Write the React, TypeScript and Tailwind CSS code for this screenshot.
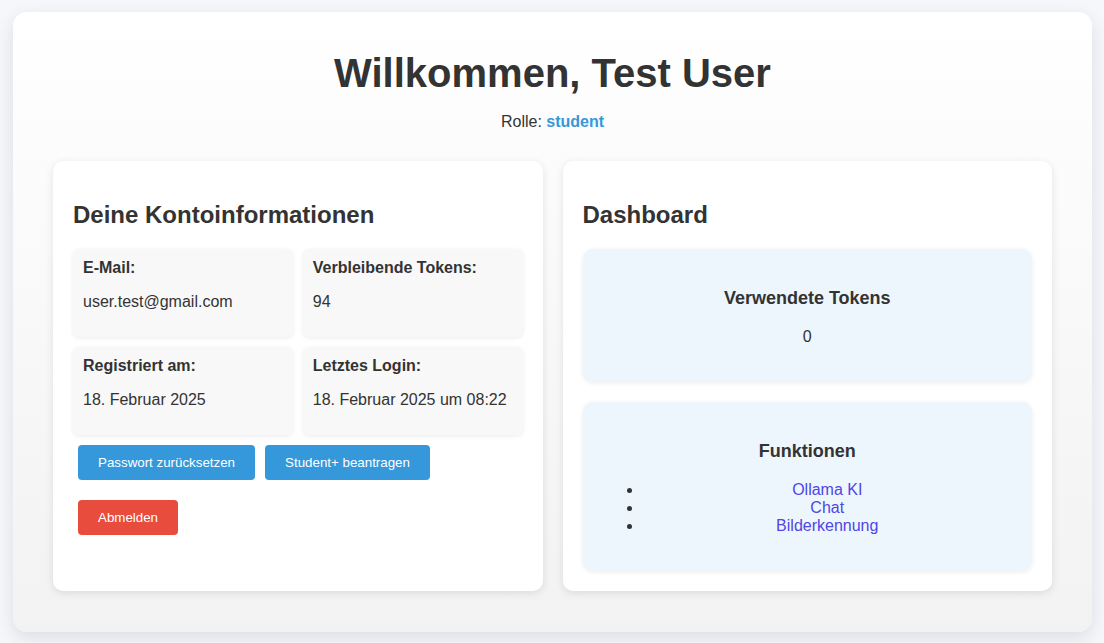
import React from "react";

const info = [
    { label: "E-Mail:", value: "user.test@gmail.com" },
    { label: "Verbleibende Tokens:", value: "94" },
    { label: "Registriert am:", value: "18. Februar 2025" },
    { label: "Letztes Login:", value: "18. Februar 2025 um 08:22" },
];

const features = ["Ollama KI", "Chat", "Bilderkennung"];

export default function App() {
    return (
        <div className="min-h-[643px] bg-[#f6f7fa] pt-3 px-[13px] pb-3 text-[#333] font-['Liberation_Sans',Arial,sans-serif]">
            <div className="w-[1079px] h-[620px] rounded-[14px] bg-gradient-to-b from-white to-[#f2f2f2] shadow-[0_6px_18px_rgba(30,40,80,0.12)] px-10 pt-[38px]">
                {/* Header */}
                <h1 className="text-center text-[40px] leading-[46px] font-bold">Willkommen, Test User</h1>
                <p className="mt-[17px] text-center text-base leading-[18px]">
                    Rolle: <span className="font-bold text-[#3498db]">student</span>
                </p>

                <div className="mt-[30px] grid grid-cols-2 gap-5">
                    {/* Account info */}
                    <div className="rounded-[10px] bg-white p-5 shadow-[0_2px_8px_rgba(0,0,0,0.1)]">
                        <h2 className="mt-5 mb-5 text-2xl leading-7 font-bold">Deine Kontoinformationen</h2>
                        <div className="grid grid-cols-2 gap-2.5">
                            {info.map((item) => (
                                <div
                                    key={item.label}
                                    className="h-[88px] rounded-[6px] bg-[#f8f8f8] p-2.5 shadow-[0_1px_4px_rgba(0,0,0,0.08)]"
                                >
                                    <strong className="block text-base leading-[18px]">{item.label}</strong>
                                    <p className="mt-4 text-base leading-[18px]">{item.value}</p>
                                </div>
                            ))}
                        </div>
                        <div className="mt-[5px] flex">
                            <button className="m-[5px] h-[35px] rounded-[4px] bg-[#3498db] px-5 text-[13.33px] text-white">
                                Passwort zurücksetzen
                            </button>
                            <button className="m-[5px] h-[35px] rounded-[4px] bg-[#3498db] px-5 text-[13.33px] text-white">
                                Student+ beantragen
                            </button>
                        </div>
                        <div className="mt-2.5 flex">
                            <button className="m-[5px] h-[35px] rounded-[4px] bg-[#e74c3c] px-5 text-[13.33px] text-white">
                                Abmelden
                            </button>
                        </div>
                    </div>

                    {/* Dashboard */}
                    <div className="rounded-[10px] bg-white p-5 shadow-[0_2px_8px_rgba(0,0,0,0.1)]">
                        <h2 className="mt-5 mb-5 text-2xl leading-7 font-bold">Dashboard</h2>
                        <div className="rounded-[10px] bg-[#eef6fd] p-5 text-center shadow-[0_1px_5px_rgba(0,0,0,0.08)]">
                            <h3 className="mt-[19px] mb-[19px] text-[18px] leading-[21px] font-bold">Verwendete Tokens</h3>
                            <p className="mb-4 text-base leading-[18px]">0</p>
                        </div>
                        <div className="mt-5 rounded-[10px] bg-[#eef6fd] p-5 text-center shadow-[0_1px_5px_rgba(0,0,0,0.08)]">
                            <h3 className="mt-[19px] mb-[19px] text-[18px] leading-[21px] font-bold">Funktionen</h3>
                            <ul className="mb-4 list-disc pl-10 text-base leading-[18px]">
                                {features.map((f) => (
                                    <li key={f}>
                                        <a href="#" className="text-[#4f46e5]">
                                            {f}
                                        </a>
                                    </li>
                                ))}
                            </ul>
                        </div>
                    </div>
                </div>
            </div>
        </div>
    );
}
